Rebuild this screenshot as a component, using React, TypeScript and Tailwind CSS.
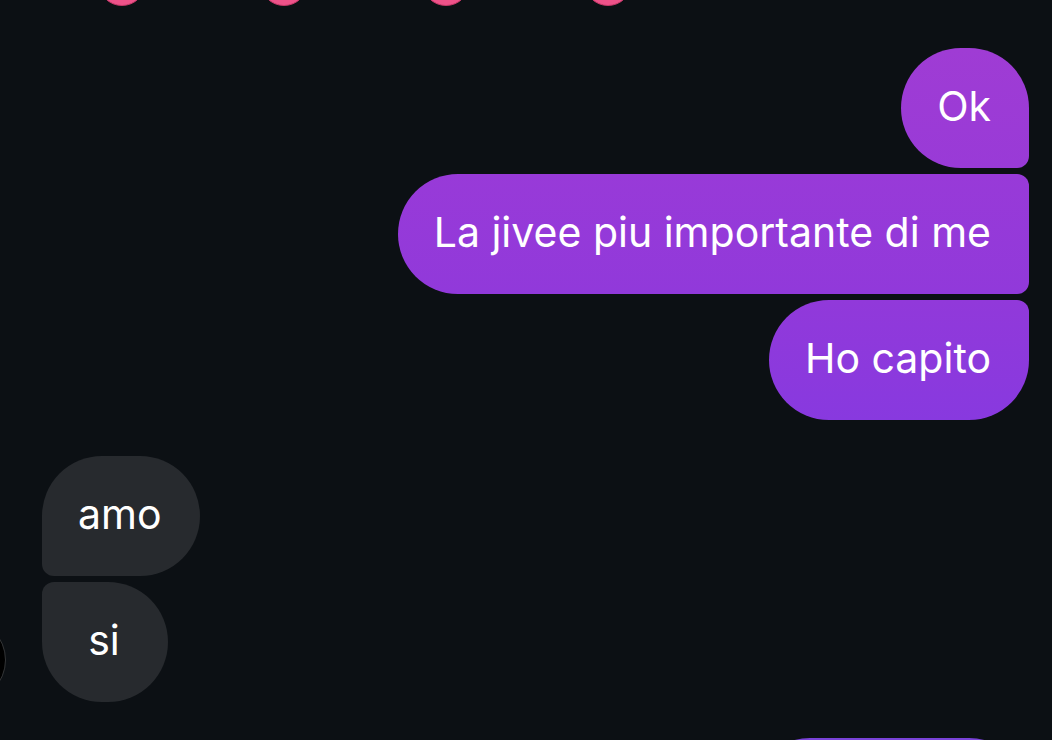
import clsx from "clsx"

type Message = {
  text: string
  shape: string
}

const sent: Message[] = [
  { text: "Ok", shape: "rounded-[60px] rounded-br-xl from-[#9f3cd4] to-[#993ad7]" },
  { text: "La jivee piu importante di me", shape: "rounded-l-[60px] rounded-r-xl from-[#983ad8] to-[#9139da]" },
  { text: "Ho capito", shape: "rounded-[60px] rounded-tr-xl from-[#9139da] to-[#8839df]" },
]

const received: Message[] = [
  { text: "amo", shape: "rounded-[60px] rounded-bl-xl" },
  { text: "si", shape: "rounded-[60px] rounded-tl-xl" },
]

const reactions = [1, 2, 3, 4]

function Bubble({ message, mine }: { message: Message; mine?: boolean }) {
  return (
    <li
      className={clsx(
        "min-w-[126px] pl-9 pr-[38px] pt-7 pb-8 text-center text-[41px] leading-[60px] whitespace-nowrap text-white",
        mine ? "bg-linear-to-b" : "bg-[#272a2e]",
        message.shape
      )}
    >
      {message.text}
    </li>
  )
}

export default function App() {
  return (
    <main className="h-screen overflow-hidden bg-[#0c1014] font-['Inter','Liberation_Sans',sans-serif]">

      {/* End of the previous message */}
      <div className="-mt-[42px] flex gap-[114px] pl-[98px]" aria-hidden="true">
        {reactions.map(n => (
          <span key={n} className="size-12 rounded-full border border-[#c43767] bg-[#ee5289]" />
        ))}
      </div>

      {/* Sent */}
      <ul className="mt-[42px] flex flex-col items-end gap-1.5 pr-[23px]">
        {sent.map(message => (
          <Bubble key={message.text} message={message} mine />
        ))}
      </ul>

      {/* Received */}
      <div className="mt-9 -ml-[78px] flex items-end gap-9">
        <div className="size-[84px] shrink-0 rounded-full border border-[#343638] bg-black" />
        <ul className="flex flex-col items-start gap-1.5">
          {received.map(message => (
            <Bubble key={message.text} message={message} />
          ))}
        </ul>
      </div>

      {/* Start of the next message */}
      <div className="mt-9 flex justify-end pr-[23px]" aria-hidden="true">
        <div className="h-[120px] w-[279px] rounded-[60px] bg-[#7a43d8]" />
      </div>
    </main>
  )
}
